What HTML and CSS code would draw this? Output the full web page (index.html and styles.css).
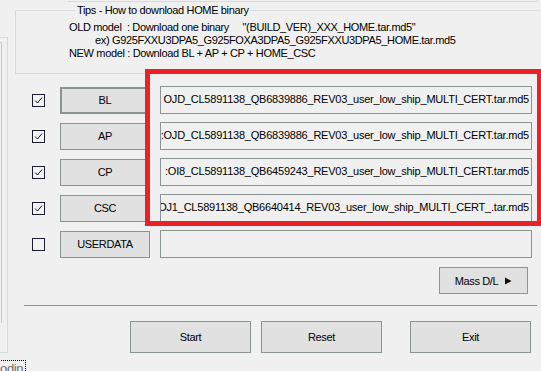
FILE: index.html
```html
<!DOCTYPE html>
<html lang="en">
<head>
  <meta charset="UTF-8">
  <title>Odin - Download</title>
  <link rel="stylesheet" href="styles.css">
</head>
<body>
  <div class="window">
    <div class="content">
      <!-- left panel, mostly outside the view -->
      <div class="side"><div class="side-inner"></div></div>

      <div class="main">
        <div class="top-strip"></div>

        <fieldset class="tips">
          <legend>Tips - How to download HOME binary</legend>
          <div class="tip-line">OLD model  : Download one binary     "(BUILD_VER)_XXX_HOME.tar.md5"</div>
          <div class="tip-line indent">ex) G925FXXU3DPA5_G925FOXA3DPA5_G925FXXU3DPA5_HOME.tar.md5</div>
          <div class="tip-line">NEW model : Download BL + AP + CP + HOME_CSC</div>
        </fieldset>

        <div class="files">
          <div class="file-row">
            <span class="check"><svg width="11" height="11" viewBox="0 0 11 11"><polyline points="2,5.5 4.5,8 9,2.5" fill="none" stroke="#1a1a33" stroke-width="1"/></svg></span>
            <button class="btn file-btn default">BL</button>
            <div class="path"><span>OJD_CL5891138_QB6839886_REV03_user_low_ship_MULTI_CERT.tar.md5</span></div>
          </div>
          <div class="file-row">
            <span class="check"><svg width="11" height="11" viewBox="0 0 11 11"><polyline points="2,5.5 4.5,8 9,2.5" fill="none" stroke="#1a1a33" stroke-width="1"/></svg></span>
            <button class="btn file-btn">AP</button>
            <div class="path"><span>:OJD_CL5891138_QB6839886_REV03_user_low_ship_MULTI_CERT.tar.md5</span></div>
          </div>
          <div class="file-row">
            <span class="check"><svg width="11" height="11" viewBox="0 0 11 11"><polyline points="2,5.5 4.5,8 9,2.5" fill="none" stroke="#1a1a33" stroke-width="1"/></svg></span>
            <button class="btn file-btn">CP</button>
            <div class="path"><span>:OI8_CL5891138_QB6459243_REV03_user_low_ship_MULTI_CERT.tar.md5</span></div>
          </div>
          <div class="file-row">
            <span class="check"><svg width="11" height="11" viewBox="0 0 11 11"><polyline points="2,5.5 4.5,8 9,2.5" fill="none" stroke="#1a1a33" stroke-width="1"/></svg></span>
            <button class="btn file-btn">CSC</button>
            <div class="path"><span>OJ1_CL5891138_QB6640414_REV03_user_low_ship_MULTI_CERT_.tar.md5</span></div>
          </div>
          <div class="file-row">
            <span class="check"></span>
            <button class="btn file-btn">USERDATA</button>
            <div class="path"></div>
          </div>
        </div>

        <div class="mass-row">
          <button class="btn mass-btn">Mass D/L <svg width="8" height="8" viewBox="0 0 8 8"><polygon points="1,0.5 7.5,4 1,7.5" fill="#111"/></svg></button>
        </div>

        <div class="divider"></div>

        <div class="actions">
          <button class="btn action-btn">Start</button>
          <button class="btn action-btn">Reset</button>
          <button class="btn action-btn exit">Exit</button>
        </div>
      </div>
    </div>

    <div class="footer"><span class="odin-link">odin</span></div>

    <!-- red annotation drawn over the file list -->
    <div class="highlight"></div>
  </div>
</body>
</html>
```

FILE: styles.css
```css
body {
  margin: 0;
  padding: 0;
  background: #f0f0f0;
  font-family: 'Liberation Sans', Arial, sans-serif;
  font-size: 11px;
  letter-spacing: -0.35px;
  color: #000;
}

.window {
  position: relative;
  width: 541px;
  height: 371px;
  overflow: hidden;
}

.content {
  display: flex;
  height: 358px;
}

/* left panel edge */
.side {
  width: 7px;
  flex: none;
  margin-top: 37px;
  height: 314px;
  border-top: 1px solid #dadada;
  border-right: 1px solid #dadada;
  border-bottom: 1px solid #dadada;
}

.side-inner {
  width: 0;
  height: 280px;
  margin-top: 4px;
  border-top: 1px solid #c9c9c9;
  border-right: 1px solid #c9c9c9;
  padding-left: 1px;
}

.main {
  flex: 1;
  min-width: 0;
}

.top-strip {
  height: 1px;
  margin-left: 60px;
  margin-right: 3px;
  border-right: 1px solid #dadada;
  border-bottom: 1px solid #dadada;
}

/* tips group box */
.tips {
  margin: 2px -30px 0 7px;
  padding: 4px 0 13px 53px;
  border: 1px solid #dadada;
  min-width: 0;
}

.tips legend {
  margin-left: 6px;
  padding: 0 2px;
  line-height: 13px;
}

.tip-line {
  line-height: 13px;
  white-space: pre;
}

.tip-line.indent {
  padding-left: 26px;
}

/* file rows */
.files {
  display: flex;
  flex-direction: column;
  gap: 8px;
  margin-top: 12px;
}

.file-row {
  display: flex;
  align-items: center;
  height: 28px;
  padding-left: 24px;
}

.check {
  width: 11px;
  height: 11px;
  flex: none;
  border: 1px solid #1a1a33;
  background: #f3f3f3;
  display: flex;
}

.btn {
  font-family: 'Liberation Sans', Arial, sans-serif;
  font-size: 11px;
  letter-spacing: -0.35px;
  color: #000;
  background: #e1e1e1;
  border: 1px solid #8a9494;
  border-radius: 0;
  padding: 0;
  margin: 0;
  box-sizing: border-box;
}

.file-btn {
  width: 90px;
  height: 27px;
  margin-left: 15px;
}

.file-btn.default {
  border-width: 2px;
}

.path {
  width: 372px;
  height: 28px;
  margin-left: 10px;
  box-sizing: border-box;
  border: 1px solid #8a9494;
  display: flex;
  justify-content: flex-end;
  overflow: hidden;
  padding: 6px 2px 0 0;
  letter-spacing: -0.22px;
}

.path span {
  white-space: nowrap;
  line-height: 13px;
}

.mass-row {
  display: flex;
  justify-content: flex-end;
  margin-top: 9px;
  padding-right: 13px;
}

.mass-btn {
  width: 89px;
  height: 27px;
  display: flex;
  align-items: center;
  justify-content: center;
  gap: 6px;
}

.divider {
  height: 1px;
  margin: 11px 4px 0 16px;
  background: #8a9191;
}

.actions {
  display: flex;
  margin-top: 15px;
  padding-left: 122px;
}

.action-btn {
  width: 121px;
  height: 32px;
  margin-right: 10px;
}

.action-btn.exit {
  margin-left: 18px;
}

.footer {
  padding-top: 2px;
}

.odin-link {
  display: inline-block;
  margin-left: -4px;
  padding: 1px 2px 0 3px;
  border: 1px dotted #000;
  color: #6d6d6d;
  font-size: 13px;
  line-height: 14px;
}

.highlight {
  position: absolute;
  left: 145px;
  top: 69px;
  width: 397px;
  height: 157px;
  box-sizing: border-box;
  border: 5px solid #ec2027;
}
```
